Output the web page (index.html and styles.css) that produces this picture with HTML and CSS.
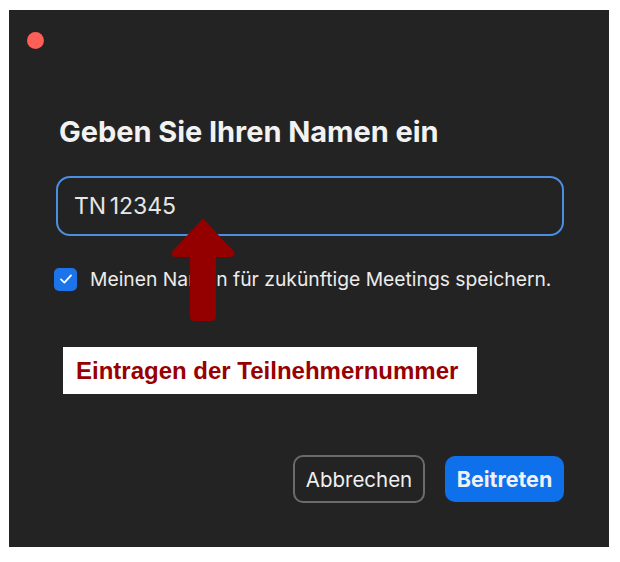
FILE: index.html
```html
<!DOCTYPE html>
<html lang="de">
  <head>
    <meta charset="UTF-8">
    <title>Namen eingeben</title>
    <link rel="stylesheet" href="styles.css">
  </head>
  <body>
    <div class="dialog">
      <div class="dialog__close"></div>
      <h1 class="dialog__title">Geben Sie Ihren Namen ein</h1>
      <div class="name-input">TN 12345</div>
      <label class="remember">
        <span class="remember__box">
          <svg width="16" height="16" viewBox="0 0 16 16"><path d="M3 8.4 L6.4 11.6 L13 4.4" fill="none" stroke="#fff" stroke-width="1.8" stroke-linecap="round" stroke-linejoin="round"/></svg>
        </span>
        <span class="remember__text">Meinen Namen für zukünftige Meetings speichern.</span>
      </label>
      <div class="note">Eintragen der Teilnehmernummer</div>
      <div class="actions">
        <button class="btn btn--cancel">Abbrechen</button>
        <button class="btn btn--join">Beitreten</button>
      </div>
      <!-- annotation arrow lies over the checkbox label -->
      <svg class="arrow" width="68" height="104" viewBox="0 0 68 104">
        <path d="M34 2 L64 34 Q66 38 61 38 L46 38 L46 98 Q46 102 42 102 L26 102 Q22 102 22 98 L22 38 L7 38 Q2 38 4 34 Z" fill="#940000" stroke="#940000" stroke-width="2" stroke-linejoin="round"/>
      </svg>
    </div>
  </body>
</html>
```

FILE: styles.css
```css
* {
  box-sizing: border-box;
}
html, body {
  margin: 0;
  padding: 0;
  background: #fff;
  font-family: Inter, "Noto Sans", sans-serif;
}

.dialog {
  position: relative;
  margin: 10px 0 0 9px;
  width: 600px;
  height: 537px;
  background: #232323;
  padding: 22px 45px 0 47px;
  display: flex;
  flex-direction: column;
}
.dialog__close {
  width: 17px;
  height: 17px;
  margin-left: -29px;
  border-radius: 50%;
  background: #fe5f57;
}
.dialog__title {
  margin: 66px 0 0 3px;
  font-size: 29px;
  font-weight: 700;
  color: #f2f2f2;
  line-height: 34px;
  letter-spacing: -0.05px;
}

.name-input {
  margin-top: 27px;
  height: 60px;
  border: 2px solid #4a8fe1;
  border-radius: 14px;
  padding: 0 0 0 16px;
  display: flex;
  align-items: center;
  font-size: 23px;
  color: #e6e6e6;
  word-spacing: -3px;
}

.remember {
  margin-top: 31px;
  display: flex;
  align-items: center;
  gap: 13px;
  margin-left: -2px;
}
.remember__box {
  width: 23px;
  height: 23px;
  border-radius: 5px;
  background: #1b74e9;
  display: flex;
  align-items: center;
  justify-content: center;
}
.remember__text {
  font-size: 19.3px;
  color: #ececec;
}

.note {
  margin: 56px 0 0 7px;
  width: 414px;
  height: 47px;
  background: #fff;
  color: #990000;
  font-family: "Liberation Sans", Arial, sans-serif;
  font-weight: 700;
  font-size: 24px;
  display: flex;
  align-items: center;
  padding-left: 13px;
}

.actions {
  margin-top: 61px;
  display: flex;
  justify-content: flex-end;
  gap: 20px;
}
.btn {
  font-family: Inter, "Noto Sans", sans-serif;
  font-size: 20.5px;
  height: 48px;
  border-radius: 10px;
  padding: 0;
  color: #f0f0f0;
}
.btn--cancel {
  background: #232323;
  border: 2px solid #6b6b6b;
  width: 132px;
}
.btn--join {
  background: #0e71eb;
  border: none;
  font-weight: 700;
  font-size: 21.5px;
  width: 119px;
  height: 46px;
  margin-top: 1px;
}

.arrow {
  position: absolute;
  left: 160px;
  top: 208px;
}
```
